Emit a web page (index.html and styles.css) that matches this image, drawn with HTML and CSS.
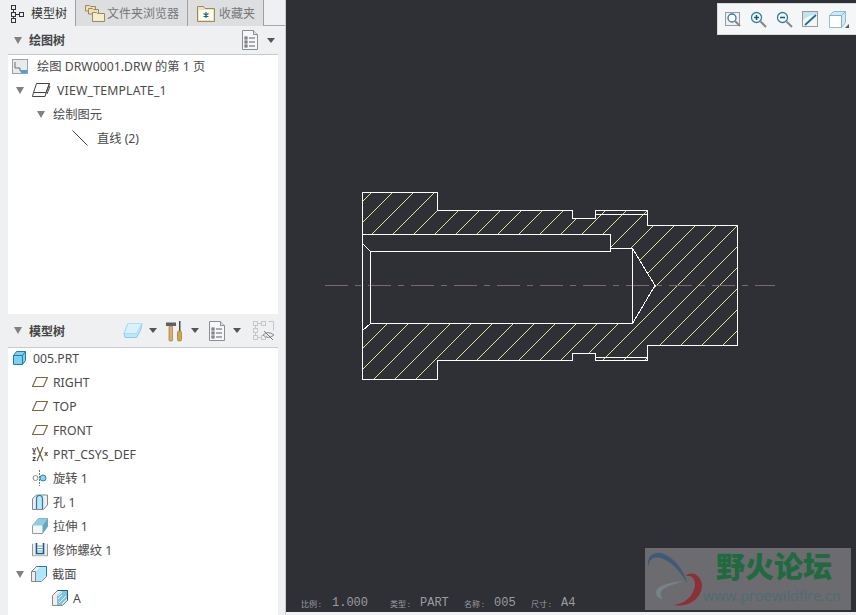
FILE: index.html
```html
<!DOCTYPE html>
<html lang="zh">
<head>
<meta charset="utf-8">
<title>模型树</title>
<link rel="stylesheet" href="styles.css">
</head>
<body>
<div class="app">
  <aside class="panel">
    <nav class="tabs">
      <div class="tab active">
        <svg class="tab-icon" width="15" height="19" viewBox="0 0 15 19"><g fill="none" stroke="#333"><rect x="1.5" y="1.5" width="4" height="4"/><rect x="1.5" y="8.5" width="4" height="4"/><rect x="1.5" y="14.5" width="4" height="4"/><rect x="9.5" y="8.5" width="4" height="4"/><path d="M3.5 5.5v3M3.5 12.5v2M5.5 10.5h4"/></g></svg>
        <span>模型树</span>
      </div>
      <div class="tab t-files">
        <svg width="22" height="20" viewBox="0 0 22 20"><g stroke="#9a8a62" fill="#f1dfb4"><path d="M1.500 8V2.500h4l1 1h5V8z"/><path d="M4.500 11V5.500h4l1 1h5V11z"/><path d="M8.500 18.500V9.500h4l1 1h7v8z" fill="#f6ecd0"/></g></svg>
        <span>文件夹浏览器</span>
      </div>
      <div class="tab t-fav">
        <svg width="20" height="19" viewBox="0 0 20 19"><path d="M1.500 17.500V2.500h6l1.500 2h9.500v13z" fill="#f4e3b8" stroke="#9a8a62"/><rect x="3" y="6" width="14" height="10" fill="#fdfbf2"/><path d="M10 8v6M7.500 9.500l5 3M12.500 9.500l-5 3" stroke="#0f6a86" stroke-width="1.200"/></svg>
        <span>收藏夹</span>
      </div>
    </nav>

    <header class="sec-head sec-draw">
      <i class="caret head-caret"></i>
      <b class="sec-title">绘图树</b>
      <span class="tools">
        <svg width="16" height="20" viewBox="0 0 16 20"><use href="#doc"/></svg>
        <i class="caret"></i>
      </span>
    </header>
    <section class="tree tree-draw">
      <div class="row p-r1">
        <svg class="ico-drw" width="16" height="15" viewBox="0 0 16 15"><rect x=".5" y=".5" width="15" height="14" fill="#e8eaec" stroke="#9aa0a6"/><path d="M3 3v6h5v3h5" fill="none" stroke="#6b7278"/><rect x="9" y="11" width="6" height="3" fill="#4aa3d8"/></svg>
        <span>绘图 DRW0001.DRW 的第 1 页</span>
      </div>
      <div class="row p-r2">
        <i class="caret tree-caret"></i>
        <svg class="ico-view" width="20" height="16" viewBox="0 0 20 16"><path d="M5.500 1.500h13l-3.500 9.500-1 3.500H1.500l1-4z" fill="#fff" stroke="#444"/><path d="M2.500 10.500h12.500M15 10.500l3.500-9M16 12l3-8" fill="none" stroke="#444"/></svg>
        <span>VIEW_TEMPLATE_1</span>
      </div>
      <div class="row p-r3">
        <i class="caret tree-caret"></i>
        <span>绘制图元</span>
      </div>
      <div class="row p-r4">
        <svg class="ico-line" width="16" height="16" viewBox="0 0 16 16"><path d="M.5.500l15 15" stroke="#444" fill="none"/></svg>
        <span>直线 (2)</span>
      </div>
    </section>

    <header class="sec-head sec-model">
      <i class="caret head-caret"></i>
      <b class="sec-title">模型树</b>
      <span class="tools tools-model">
        <svg width="20" height="17" viewBox="0 0 20 17"><path d="M5 1.500h14l-1.500 7-4 7H2l-1-4z" fill="#bfe6f6" stroke="#8ccbe6"/><path d="M5 1.500L1 11.500h12.500l5.500-10" fill="#d8f1fb" stroke="#a8dcf0"/></svg>
        <i class="caret"></i>
        <svg class="tool-hammer" width="19" height="22" viewBox="0 0 19 22"><path d="M1 2.500h10v3.500H1z" fill="#5c6064"/><rect x="4" y="6" width="3.500" height="15" rx="1" fill="#d8b070" stroke="#8a6a30" stroke-width=".6"/><rect x="14" y="1" width="1.500" height="10" fill="#4a4e52"/><rect x="12.500" y="11" width="4" height="10" rx="1.500" fill="#d8a23c" stroke="#8a6a30" stroke-width=".6"/></svg>
        <i class="caret"></i>
        <svg class="tool-doc" width="16" height="20" viewBox="0 0 16 20"><use href="#doc"/></svg>
        <i class="caret"></i>
        <svg class="tool-eye" width="22" height="22" viewBox="0 0 22 22"><g fill="none" stroke="#c5c8ca"><rect x=".5" y="1.500" width="4" height="4"/><rect x=".5" y="8.500" width="4" height="4"/><rect x=".5" y="15.500" width="4" height="4"/><rect x="8.500" y="1.500" width="4" height="4"/><rect x="8.500" y="15.500" width="4" height="4"/><path d="M15.500 1.500h5v9"/><path d="M2.500 5.500v3M2.500 12.500v3M4.500 3.500h4M4.500 17.500h4"/></g><path d="M10 15q5-5 11 0q-6 5-11 0z" fill="#e6e8ea" stroke="#8a8e92"/><path d="M11 11l9 9" stroke="#777"/></svg>
      </span>
    </header>
    <section class="tree tree-model">
      <div class="row p-root">
        <svg class="ico-root" width="13" height="14" viewBox="0 0 13 14"><path d="M3.500.500h9v9l-3 4h-9v-9z" fill="#7fd0ee" stroke="#1d7ea6"/><path d="M.5 4.500h9v9M9.500 4.500l3-4" fill="none" stroke="#1d7ea6"/></svg>
        <span>005.PRT</span>
      </div>
      <div class="row p-feat">
        <svg class="ico-f" width="16" height="12" viewBox="0 0 16 12"><use href="#plane"/></svg>
        <span>RIGHT</span>
      </div>
      <div class="row p-feat">
        <svg class="ico-f" width="16" height="12" viewBox="0 0 16 12"><use href="#plane"/></svg>
        <span>TOP</span>
      </div>
      <div class="row p-feat">
        <svg class="ico-f" width="16" height="12" viewBox="0 0 16 12"><use href="#plane"/></svg>
        <span>FRONT</span>
      </div>
      <div class="row p-feat">
        <svg class="ico-f" width="16" height="16" viewBox="0 0 16 16"><path d="M5 1l6 14M11 1L5 15M1 8h3" stroke="#6b5c3c" stroke-width="1.200" fill="none"/><text x="0" y="6" class="axis">y</text><text x="0" y="15" class="axis">z</text><text x="12" y="10" class="axis">x</text></svg>
        <span>PRT_CSYS_DEF</span>
      </div>
      <div class="row p-feat">
        <svg class="ico-f" width="16" height="16" viewBox="0 0 16 16"><path d="M7.500 0v16" stroke="#777" stroke-dasharray="2 1"/><circle cx="3.500" cy="8" r="2.500" fill="#fff" stroke="#888"/><circle cx="11" cy="8" r="3" fill="#8fd2ee" stroke="#2b86ac"/></svg>
        <span>旋转 1</span>
      </div>
      <div class="row p-feat">
        <svg class="ico-f" width="16" height="16" viewBox="0 0 16 16"><path d="M.5 4.500l4-3.500h11v10l-4 4.500H.5z" fill="#eceeef" stroke="#888"/><path d="M4.500 15V5q0-3.500 3-3.500t3 3.500v10" fill="#bfe6f6" stroke="#1d7ea6" stroke-width="1.200"/></svg>
        <span>孔 1</span>
      </div>
      <div class="row p-feat">
        <svg class="ico-f" width="16" height="16" viewBox="0 0 16 16"><path d="M.5 7.500l6-7h9v8l-5 7H.5z" fill="#f4f5f6" stroke="#999"/><path d="M.5 7.500l6-7h9l-5 7z" fill="#8fcbe4"/><path d="M10.500 7.500l5-7v8l-5 7z" fill="#5fa8c8"/></svg>
        <span>拉伸 1</span>
      </div>
      <div class="row p-feat">
        <svg class="ico-f" width="16" height="14" viewBox="0 0 16 14"><rect y="0" width="16" height="14" fill="#e9ebec"/><path d="M.5 13V1M15.500 13V1" stroke="#999"/><path d="M4.500 0v10.500h7V0" fill="#fff" stroke="#155f85" stroke-width="1.600"/><path d="M5 3h6M5 5.500h6M5 8h6" stroke="#6ea8c2"/><path d="M1 12.500h14" stroke="#bbb"/></svg>
        <span>修饰螺纹 1</span>
      </div>
      <div class="row p-sect">
        <i class="caret tree-caret"></i>
        <svg class="ico-f" width="16" height="16" viewBox="0 0 16 16"><path d="M.5 5.500l5-5h10v10l-5 5H.500z" fill="#eee" stroke="#888"/><path d="M4.500 5.500l5-4.500h5.500v9l-5 5H4.500z" fill="#aee6fa"/><path d="M.5 5.500h4v10" fill="none" stroke="#888"/><path d="M5.500.5h10v10" fill="none" stroke="#1d7ea6"/></svg>
        <span>截面</span>
      </div>
      <div class="row p-leaf">
        <svg class="ico-f" width="16" height="16" viewBox="0 0 16 16"><path d="M.5 5.500l5-5h10v10l-5 5H.500z" fill="#eee" stroke="#888"/><path d="M5 5.500l5-4.500h5v9l-5 5H5z" fill="#7fc3dc"/><path d="M6 9l4-4M7 13l7-7M10 14l5-5M10 2L6 6" stroke="#e2f3fa"/><path d="M5.500.5h10v10" fill="none" stroke="#1d5f7e"/></svg>
        <span>A</span>
      </div>
    </section>
  </aside>

  <main class="stage">
    <div class="canvas">
      <svg class="drawing" width="570" height="612" viewBox="286 0 570 612">
        <defs>
          <clipPath id="section">
            <path clip-rule="evenodd" d="M362.500 192.500H437.500V210.500H572.500V218.500H595.500V210.500H647.500V225.500H737.500V345.500H647.500V360.500H595.500V353.500H572.500V360.500H437.500V379.500H362.500ZM362.500 234.500H610.500V248.500H632.500L655 285.500L632.500 323.500H370.500L362.500 330.500Z"/>
          </clipPath>
        </defs>
        <g class="hatch" clip-path="url(#section)">
          <path d="M414 150L164 400M435 150L185 400M456 150L206 400M477 150L227 400M498 150L248 400M519 150L269 400M540 150L290 400M561 150L311 400M582 150L332 400M603 150L353 400M624 150L374 400M645 150L395 400M666 150L416 400M687 150L437 400M708 150L458 400M729 150L479 400M750 150L500 400M771 150L521 400M792 150L542 400M813 150L563 400M834 150L584 400M855 150L605 400M876 150L626 400M897 150L647 400M918 150L668 400"/>
        </g>
        <path class="center" d="M325 285.500H775"/>
        <g class="edge">
          <path d="M362.500 192.500H437.500V210.500H572.500V218.500H595.500V210.500H647.500V225.500H737.500V345.500H647.500V360.500H595.500V353.500H572.500V360.500H437.500V379.500H362.500Z"/>
          <path d="M362.500 234.500H610.500V251.500H370.500V323.500H632.500V248.500H610.500"/>
          <path d="M632.500 248.500L655 285.500L632.500 323.500M362.500 243.500L370.500 251.500M370.500 323.500L362.500 330.500"/>
          <path d="M595.500 214.500H647.500M595.500 357.500H647.500"/>
        </g>
      </svg>

      <div class="viewbar">
        <svg width="16" height="16" viewBox="0 0 16 16"><rect x=".5" y="1.500" width="14" height="13" fill="#f0f1f2" stroke="#9a9a9a"/><circle cx="7" cy="7" r="4" fill="#fff" stroke="#2f7fa3" stroke-width="1.300"/><path d="M10 10l5 5" stroke="#888" stroke-width="2"/></svg>
        <svg width="17" height="17" viewBox="0 0 17 17"><circle cx="6.500" cy="6.500" r="5" fill="#fff" stroke="#2f7fa3" stroke-width="1.300"/><path d="M4 6.500h5M6.500 4v5" stroke="#0f5f85" stroke-width="1.600"/><path d="M10.500 10.500l5.500 5.500" stroke="#888" stroke-width="2"/></svg>
        <svg width="17" height="17" viewBox="0 0 17 17"><circle cx="6.500" cy="6.500" r="5" fill="#fff" stroke="#2f7fa3" stroke-width="1.300"/><path d="M4 6.500h5" stroke="#0f5f85" stroke-width="1.600"/><path d="M10.500 10.500l5.500 5.500" stroke="#888" stroke-width="2"/></svg>
        <svg width="16" height="16" viewBox="0 0 16 16"><rect x=".5" y=".5" width="15" height="15" fill="#f5f6f7" stroke="#9a9a9a"/><path d="M1 1h14v2Q7 4 1 9z" fill="#bfe3f3"/><path d="M3 14L14 4" stroke="#1f6f95" stroke-width="1.800"/></svg>
        <span class="view-cube">
          <svg width="17" height="17" viewBox="0 0 17 17"><path d="M4.500.500h12v11l-4 5H.5v-12z" fill="#cfe8f4" stroke="#8fbed2"/><rect x="1" y="5" width="11" height="11" fill="#fff"/><path d="M.5 4.500h12v12M12.500 4.500l4-4" fill="none" stroke="#7fb2c8"/></svg>
          <i class="corner"></i>
        </span>
      </div>

      <div class="status">
        <span class="st-cjk">比例 :</span><span class="st-val v1">1.000</span>
        <span class="st-cjk c2">类型 :</span><span class="st-val v2">PART</span>
        <span class="st-cjk c2">名称 :</span><span class="st-val v3">005</span>
        <span class="st-cjk c2">尺寸 :</span><span class="st-val">A4</span>
      </div>

      <div class="mark">
        <svg class="mark-logo" width="58" height="58" viewBox="0 0 58 58"><path d="M2 17C-2 6 8 0 17 4C28 9 37 20 40 33C34 22 24 11 14 8C7 6 1 9 2 17Z" fill="#3f5a76"/><path d="M27 55C37 54 47 46 48 35C48 28 44 25 38 26C46 20 54 26 55 35C55 48 42 58 27 55Z" fill="#8c3038"/><path d="M37 31C25 32 10 35 9 42C9 47 13 49 16 49C12 45 13 40 20 37C26 34 32 33 37 31Z" fill="#79818a"/></svg>
        <div class="mark-text">
          <div class="mark-cn">野火论坛</div>
          <div class="mark-url">www.proewildfire.cn</div>
        </div>
      </div>
    </div>
    <div class="strip"></div>
  </main>
</div>

<svg class="sprites" width="0" height="0">
  <defs>
    <g id="doc"><path d="M.5.500h11l4 4v15H.5z" fill="#f6f7f8" stroke="#8a8e92"/><path d="M11.500.500v4h4" fill="#dfe2e4" stroke="#8a8e92"/><g fill="none" stroke="#5c6064"><rect x="3" y="7" width="2" height="2"/><rect x="3" y="11" width="2" height="2"/><rect x="3" y="15" width="2" height="2"/><path d="M7 8h6M7 12h6M7 16h6"/></g></g>
    <path id="plane" d="M4.500 1.500h11l-4 9H.5z" fill="#fff" stroke="#7a6640" stroke-width="1.200"/>
  </defs>
</svg>
</body>
</html>
```
FILE: styles.css
```css
* { box-sizing: border-box; }
html, body { margin: 0; height: 100%; overflow: hidden; }
body {
  font-family: "Noto Sans", "Noto Sans CJK SC", sans-serif;
  font-size: 12px;
  color: #4a4a4a;
  background: #eef0f2;
}
svg { display: block; flex: none; }
i { display: block; }
.sprites { position: absolute; }

.app { display: flex; width: 856px; height: 615px; }

.panel {
  width: 286px;
  height: 615px;
  flex: none;
  display: flex;
  flex-direction: column;
  background: #eef0f2;
  border-right: 1px solid #c9cbce;
}

.tabs {
  display: flex;
  height: 26px;
  flex: none;
  border-bottom: 1px solid #a8a8a8;
}
.tab {
  display: flex;
  align-items: center;
  height: 26px;
  font-size: 12px;
  color: #777;
  background: #dcdee0;
  border-right: 1px solid #a0a0a0;
}
.tab.active {
  width: 76px;
  padding-left: 10px;
  gap: 6px;
  color: #333;
  background: #eef0f2;
}
.t-files { width: 112px; padding-left: 8px; gap: 1px; }
.t-fav { width: 76px; padding-left: 8px; gap: 3px; }

.sec-head {
  display: flex;
  align-items: center;
  flex: none;
  padding-left: 14px;
}
.sec-draw { height: 28px; }
.sec-model { height: 33px; }
.sec-title { margin-left: 7px; font-size: 12px; font-weight: 700; color: #444; }
.tools { display: flex; align-items: center; margin-left: auto; margin-right: 10px; gap: 9px; }
.tools-model { margin-right: 10px; gap: 6px; }
.tool-hammer { margin: 0 1px 0 2px; }
.tool-doc { margin: 0 2px 0 4px; }
.tool-eye { margin-left: 6px; }

.caret {
  width: 0;
  height: 0;
  border-left: 4px solid transparent;
  border-right: 4px solid transparent;
  border-top: 5px solid #555;
}
.head-caret { border-left-width: 4.500px; border-right-width: 4.500px; border-top: 7px solid #808080; }
.tree-caret { border-left-width: 4.500px; border-right-width: 4.500px; border-top: 7px solid #808080; }

.tree {
  margin: 0 7px 0 8px;
  background: #fff;
  border-top: 1px solid #c8cacc;
  flex: none;
}
.tree-draw { height: 260px; }
.tree-draw .row:first-child { margin-top: -1px; }
.tree-model { flex: 1; }
.tree-model .row:first-child { margin-top: -2px; }

.row {
  display: flex;
  align-items: center;
  height: 24px;
  white-space: nowrap;
  font-size: 12.250px;
  color: #4a4a4a;
}
.p-r1 { padding-left: 4px; gap: 9px; }
.p-r2 { padding-left: 8px; letter-spacing: .2px; }
.p-r2 .ico-view { margin: 0 6px 0 7px; }
.p-r3 { padding-left: 29px; gap: 8px; }
.p-r4 { padding-left: 64px; gap: 9px; }
.p-root { padding-left: 5px; gap: 7px; }
.p-feat { padding-left: 24px; gap: 5px; }
.p-sect { padding-left: 8px; }
.p-sect .ico-f { margin: 0 5px 0 7px; }
.p-leaf { padding-left: 44px; gap: 5px; }
.axis { font: 700 7px "Liberation Mono", monospace; fill: #333; }

.stage { flex: 1; display: flex; flex-direction: column; min-width: 0; }
.canvas {
  position: relative;
  height: 612px;
  flex: none;
  background: #2f2f36;
  overflow: hidden;
}
.strip { flex: 1; background: #f0f1f2; }

.hatch path { stroke: #e6e29c; stroke-width: 1; fill: none; shape-rendering: crispEdges; }
.edge path { stroke: #fff; stroke-width: 1; fill: none; shape-rendering: crispEdges; }
.center { stroke: #80686e; stroke-width: 1; fill: none; stroke-dasharray: 23 7 6 7; }

.viewbar {
  position: absolute;
  top: 3px;
  left: 431px;
  right: 0;
  height: 32px;
  display: flex;
  align-items: center;
  padding-left: 7px;
  gap: 9px;
  background: #f5f6f7;
  border: 1px solid #d8dadc;
  border-right: 0;
}
.view-cube { position: relative; margin-left: 2px; }
.corner {
  position: absolute;
  right: -3px;
  bottom: 0;
  width: 0;
  height: 0;
  border-left: 4px solid transparent;
  border-bottom: 4px solid #555;
}

.status {
  position: absolute;
  left: 15px;
  bottom: 1px;
  display: flex;
  align-items: center;
  height: 16px;
  color: #9c9ca0;
  font-family: "Liberation Mono", monospace;
  font-size: 12px;
}
.st-cjk {
  width: 31px;
  font-family: "Noto Sans CJK SC", sans-serif;
  font-size: 8px;
  white-space: nowrap;
}
.c2 { width: 30px; }
.v1 { width: 58px; }
.v2 { width: 44px; }
.v3 { width: 37px; }

.mark {
  position: absolute;
  left: 359px;
  top: 548px;
  width: 206px;
  height: 62px;
  display: flex;
  padding: 2px 0 0 2px;
  background: #6b6b70;
}
.mark-text { margin-left: -2px; }
.mark-cn {
  padding-left: 13px;
  height: 36px;
  font-family: "Liberation Sans", "Noto Sans CJK SC", sans-serif;
  font-size: 29px;
  line-height: 36px;
  font-weight: 900;
  color: #1f6a3e;
  white-space: nowrap;
}
.mark-url {
  margin-top: 1px;
  font-family: "Open Sans", sans-serif;
  font-size: 14.400px;
  line-height: 18px;
  color: #4f6b72;
  white-space: nowrap;
}
```
